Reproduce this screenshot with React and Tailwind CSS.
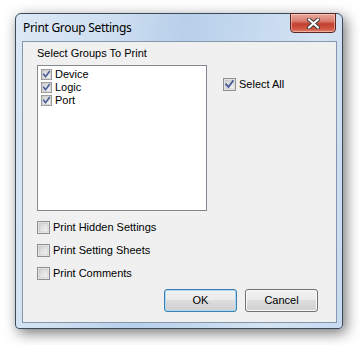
import React from 'react';

const Check = ({ size = 13, checked }) => (
    <svg width={size} height={size} viewBox="0 0 13 13" className="shrink-0">
        <defs>
            <linearGradient id="cbfill" x1="0" y1="0" x2="1" y2="1">
                <stop offset="0" stopColor="#cfcfcf" />
                <stop offset="1" stopColor="#f7f7f7" />
            </linearGradient>
        </defs>
        <rect x="0.5" y="0.5" width="12" height="12" fill="#f4f4f4" stroke="#8e8f8f" />
        <rect x="2" y="2" width="9" height="9" fill="url(#cbfill)" stroke="#b9b9b9" strokeWidth="0.6" />
        {checked && (
            <path d="M3.2 6.4 L5.4 9 L9.8 3.2" fill="none" stroke="#4b5d9a" strokeWidth="1.9" strokeLinecap="square" />
        )}
    </svg>
);

const Option = ({ label, checked, size }) => (
    <div className="flex items-center h-[13px] gap-[3px]">
        <Check checked={checked} size={size} />
        <span>{label}</span>
    </div>
);

const Button = ({ children, focused }) => (
    <button
        className={`w-[73px] h-[23px] rounded-[3px] border text-[11px] text-black bg-[linear-gradient(to_bottom,#f2f2f2_0%,#ebebeb_45%,#dddddd_50%,#cfcfcf_100%)] ${focused
            ? 'border-[#3c7fb1] shadow-[inset_0_0_0_1px_#a8daf4]'
            : 'border-[#707070] shadow-[inset_0_0_0_1px_#fbfbfb]'
            }`}
    >
        {children}
    </button>
);

const App = () => {
    const groups = ['Device', 'Logic', 'Port'];
    const extras = ['Print Hidden Settings', 'Print Setting Sheets', 'Print Comments'];

    return (
        <div className="w-[360px] h-[345px] bg-white pl-[15px] pt-[13px]" style={{ fontFamily: '"Liberation Sans", Arial, sans-serif' }}>
            {/* Window frame */}
            <div className="relative w-[328px] h-[316px] rounded-t-[6px] rounded-b-[4px] border border-[#3b4b5e] bg-[linear-gradient(100deg,#dce8f5_0%,#cfdff1_25%,#b8d0ea_45%,#c3d8ee_60%,#d5e3f3_80%,#c6daf0_100%)] shadow-[3px_4px_14px_rgba(0,0,0,0.55)] flex flex-col">
                {/* Title bar */}
                <div className="h-[27px] pl-[7px] flex items-center text-[12px] tracking-[-0.3px] text-black" style={{ fontFamily: '"Noto Sans", "Open Sans", sans-serif' }}>
                    Print Group Settings
                </div>

                {/* Close button */}
                <div className="absolute top-[-1px] right-[6px] w-[46px] h-[20px] rounded-b-[4px] border border-[#5a2626] bg-[linear-gradient(to_bottom,#e9a89d_0%,#d97c6e_40%,#c2402f_55%,#d25a45_85%,#e38a72_100%)] shadow-[inset_0_0_0_1px_rgba(255,220,210,0.5)] flex items-center justify-center">
                    <svg width="13" height="11" viewBox="0 0 13 11">
                        <path d="M2 1.5 L11 9.5 M11 1.5 L2 9.5" stroke="#3a3a3a" strokeWidth="4" strokeLinecap="round" />
                        <path d="M2 1.5 L11 9.5 M11 1.5 L2 9.5" stroke="#ffffff" strokeWidth="2.2" strokeLinecap="round" />
                    </svg>
                </div>

                {/* Client area */}
                <div className="ml-[6px] mr-[5px] h-[282px] border border-[#8497ad] bg-[#f0f0f0] text-[11px] text-black pl-[14px] pt-[5px] flex flex-col">
                    <div className="h-[13px] leading-[13px]">Select Groups To Print</div>

                    <div className="flex mt-[5px]">
                        <div className="w-[170px] h-[146px] bg-white border border-[#828790] pl-[3px] pt-[2px] flex flex-col">
                            {groups.map((g) => (
                                <Option key={g} label={g} checked size={11} />
                            ))}
                        </div>
                        <div className="ml-[16px] mt-[13px]">
                            <Option label="Select All" checked />
                        </div>
                    </div>

                    <div className="mt-[10px] flex flex-col gap-[10px]">
                        {extras.map((e) => (
                            <Option key={e} label={e} />
                        ))}
                    </div>

                    <div className="mt-[9px] mr-[18px] flex justify-end gap-[8px]">
                        <Button focused>OK</Button>
                        <Button>Cancel</Button>
                    </div>
                </div>
            </div>
        </div>
    );
};

export default App;
